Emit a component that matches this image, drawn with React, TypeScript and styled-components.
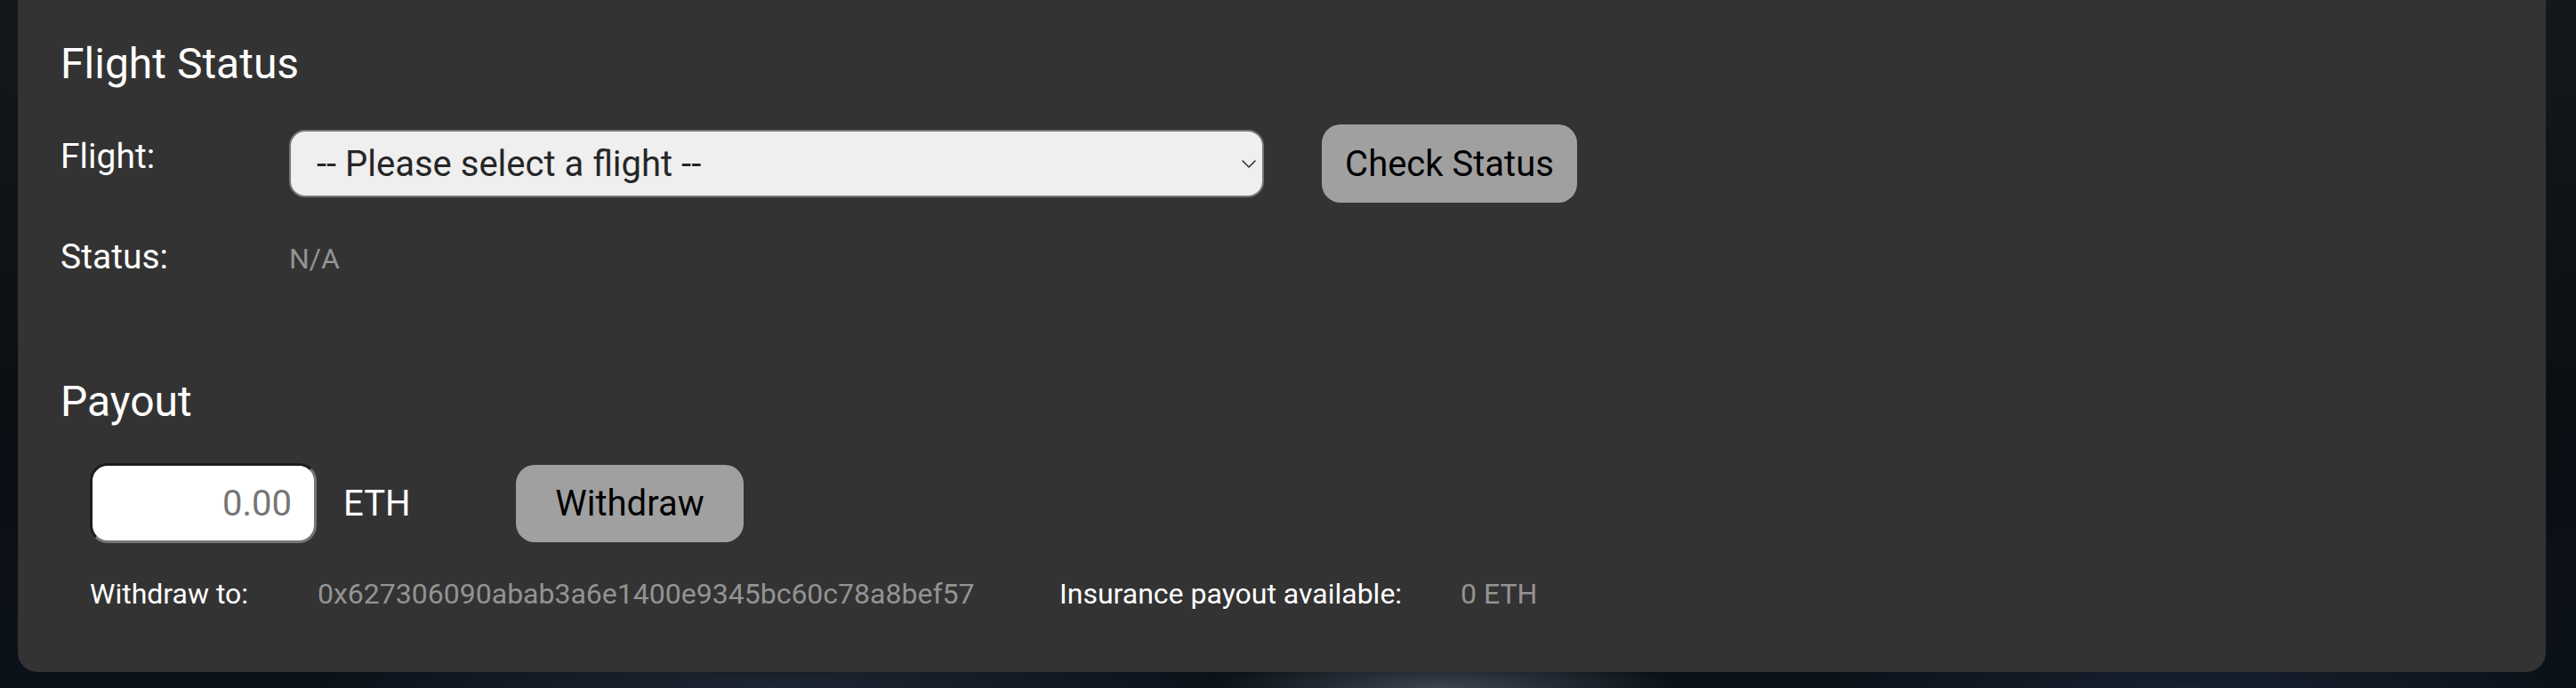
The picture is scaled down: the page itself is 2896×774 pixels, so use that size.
import React from "react";
import styled, { createGlobalStyle } from "styled-components";

const GlobalStyle = createGlobalStyle`
  html, body {
    margin: 0;
    padding: 0;
  }
  body {
    min-height: 774px;
    font-family: Roboto, "Liberation Sans", Arial, sans-serif;
    background:
      radial-gradient(ellipse 260px 40px at 56% 100%, rgba(110, 118, 128, 0.5), rgba(0, 0, 0, 0) 100%),
      radial-gradient(ellipse 500px 60px at 30% 100%, rgba(40, 52, 68, 0.6), rgba(0, 0, 0, 0) 100%),
      radial-gradient(ellipse 400px 60px at 85% 100%, rgba(30, 44, 62, 0.6), rgba(0, 0, 0, 0) 100%),
      linear-gradient(180deg, #14171c 0%, #0b0e13 60%, #0c121a 100%);
  }
`;

const Page = styled.div`
  padding: 0 34px 18px 20px;
`;

const Panel = styled.section`
  background: #333333;
  border-radius: 0 0 22px 22px;
  padding: 44px 0 69px 48px;
  color: #ffffff;
`;

const SectionTitle = styled.h2<{ $mt?: number }>`
  margin: ${(p) => p.$mt ?? 0}px 0 0 0;
  font-size: 48px;
  line-height: 56px;
  font-weight: 400;
  color: #ffffff;
`;

const FieldRow = styled.div<{ $mt: number; $align?: string }>`
  display: flex;
  align-items: ${(p) => p.$align ?? "center"};
  margin-top: ${(p) => p.$mt}px;
`;

const FieldLabel = styled.span<{ $width: number; $size: number; $offset?: number }>`
  flex: none;
  width: ${(p) => p.$width}px;
  font-size: ${(p) => p.$size}px;
  line-height: ${(p) => Math.round(p.$size * 1.18)}px;
  margin-top: ${(p) => p.$offset ?? 0}px;
  color: #ffffff;
  white-space: nowrap;
`;

const FieldValue = styled.span<{ $width?: number }>`
  flex: none;
  ${(p) => (p.$width ? `width: ${p.$width}px;` : "")}
  font-size: 32px;
  line-height: 38px;
  color: #939393;
  white-space: nowrap;
`;

const SelectWrap = styled.div<{ $mt: number }>`
  position: relative;
  flex: none;
  width: 1096px;
  height: 76px;
  margin-top: ${(p) => p.$mt}px;
`;

const FlightSelect = styled.select`
  appearance: none;
  -webkit-appearance: none;
  box-sizing: border-box;
  width: 100%;
  height: 100%;
  margin: 0;
  padding: 0 60px 0 29px;
  background: #efefef;
  border: 2px solid #767676;
  border-radius: 18px;
  font-family: Roboto, "Liberation Sans", Arial, sans-serif;
  font-size: 40px;
  color: #262626;
  outline: none;
`;

const Chevron = styled.svg`
  position: absolute;
  right: 9px;
  top: 34px;
  width: 16px;
  height: 9px;
  pointer-events: none;
`;

const ActionButton = styled.button<{ $width: number; $height: number; $ml: number }>`
  flex: none;
  box-sizing: border-box;
  width: ${(p) => p.$width}px;
  height: ${(p) => p.$height}px;
  margin-left: ${(p) => p.$ml}px;
  padding: 0;
  border: none;
  border-radius: 21px;
  background: #a0a0a0;
  color: #000000;
  font-family: Roboto, "Liberation Sans", Arial, sans-serif;
  font-size: 40px;
  cursor: pointer;
`;

const PayoutBlock = styled.div`
  padding-left: 33px;
`;

const AmountInput = styled.input`
  flex: none;
  box-sizing: border-box;
  width: 255px;
  height: 90px;
  margin: 0;
  padding: 0 25px 0 10px;
  background: #ffffff;
  border-style: solid;
  border-width: 3px;
  border-color: #1d1d1d #767676 #767676 #1d1d1d;
  border-radius: 20px;
  font-family: Roboto, "Liberation Sans", Arial, sans-serif;
  font-size: 40px;
  color: #111;
  text-align: right;
  outline: none;
  &::placeholder {
    color: #757575;
  }
`;

const Unit = styled.span`
  flex: none;
  width: 164px;
  margin-left: 30px;
  font-size: 40px;
  line-height: 47px;
  color: #ffffff;
`;

export default function App() {
  return (
    <>
      <GlobalStyle />
      <Page>
        <Panel>
          <SectionTitle>Flight Status</SectionTitle>
          <FieldRow $mt={40} $align="flex-start">
            <FieldLabel $width={257} $size={39} $offset={13}>
              Flight:
            </FieldLabel>
            <SelectWrap $mt={6}>
              <FlightSelect defaultValue="">
                <option value="">-- Please select a flight --</option>
              </FlightSelect>
              <Chevron viewBox="0 0 16 9">
                <polyline
                  points="1,1 8,8 15,1"
                  fill="none"
                  stroke="#333"
                  strokeWidth="1.6"
                  strokeLinecap="round"
                  strokeLinejoin="round"
                />
              </Chevron>
            </SelectWrap>
            <ActionButton $width={287} $height={88} $ml={65}>
              Check Status
            </ActionButton>
          </FieldRow>
          <FieldRow $mt={38} $align="baseline">
            <FieldLabel $width={257} $size={39}>
              Status:
            </FieldLabel>
            <FieldValue>N/A</FieldValue>
          </FieldRow>

          <SectionTitle $mt={112}>Payout</SectionTitle>
          <PayoutBlock>
            <FieldRow $mt={41}>
              <AmountInput type="text" placeholder="0.00" />
              <Unit>ETH</Unit>
              <ActionButton $width={256} $height={87} $ml={30}>
                Withdraw
              </ActionButton>
            </FieldRow>
            <FieldRow $mt={38} $align="baseline">
              <FieldLabel $width={256} $size={32}>
                Withdraw to:
              </FieldLabel>
              <FieldValue $width={834}>0x627306090abab3a6e1400e9345bc60c78a8bef57</FieldValue>
              <FieldLabel $width={451} $size={32}>
                Insurance payout available:
              </FieldLabel>
              <FieldValue>0 ETH</FieldValue>
            </FieldRow>
          </PayoutBlock>
        </Panel>
      </Page>
    </>
  );
}
